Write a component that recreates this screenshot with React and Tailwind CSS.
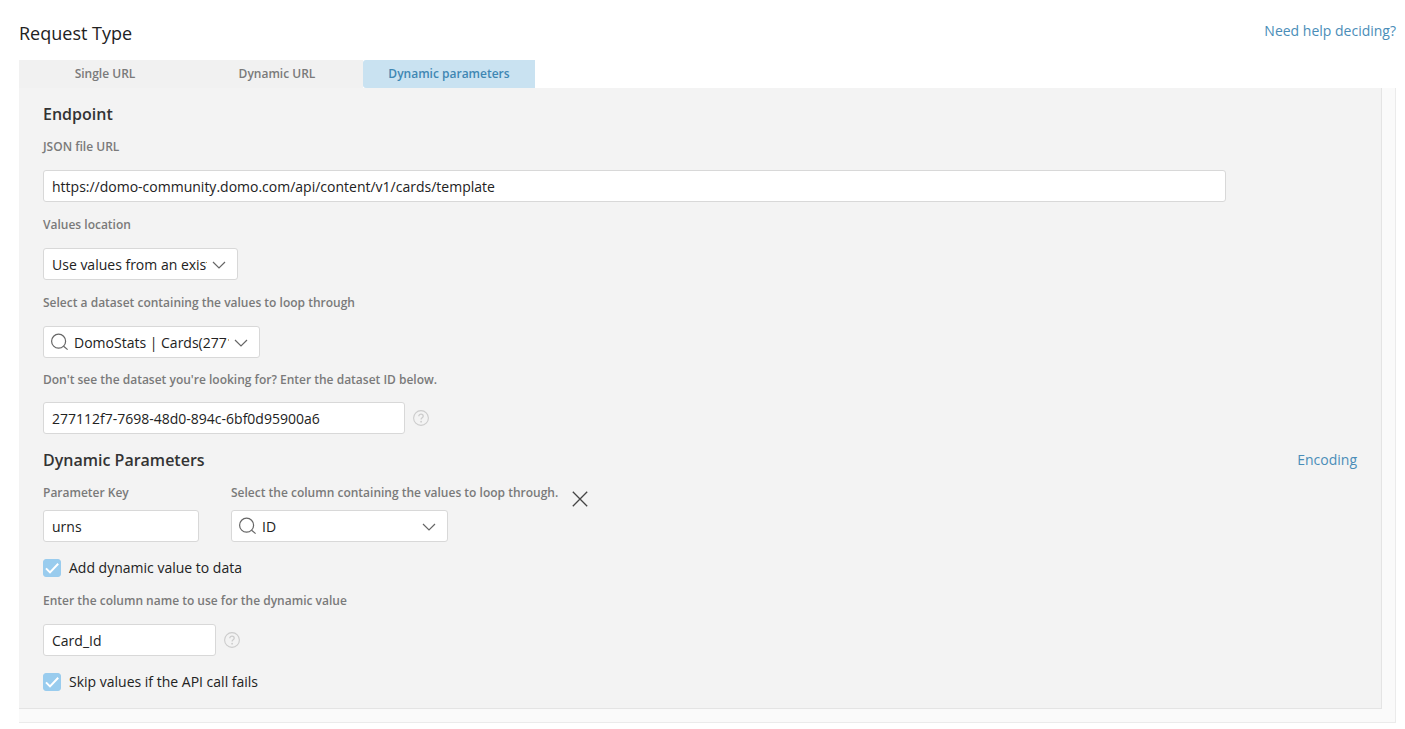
import { useState } from 'react';

const tabs = ['Single URL', 'Dynamic URL', 'Dynamic parameters'];

function Label({ htmlFor, children }) {
  return (
    <label htmlFor={htmlFor} className="block w-fit text-xs font-semibold text-[#7a7a7a]">
      {children}
    </label>
  );
}

function TextInput({ id, value, className }) {
  return (
    <input
      id={id}
      type="text"
      defaultValue={value}
      className={`block h-8 rounded-[3px] border border-[#d8d8d8] bg-white px-2 text-sm text-[#222] outline-none focus:border-[#99ccee] ${className}`}
    />
  );
}

function SearchIcon() {
  return (
    <svg viewBox="0 0 18 18" fill="none" stroke="#666" strokeWidth="1.2" className="pointer-events-none absolute top-[7px] left-2 size-[18px]">
      <circle cx="7.6" cy="8.2" r="7" />
      <path d="M12.6 13.2l4 3.4" />
    </svg>
  );
}

function Select({ id, option, search, className }) {
  return (
    <div className={`relative ${className}`}>
      {search && <SearchIcon />}
      <select
        id={id}
        className={`block h-8 w-full appearance-none overflow-hidden rounded-[3px] border border-[#d8d8d8] bg-white pt-0.5 pr-[30px] text-sm text-[#222] outline-none focus:border-[#99ccee] ${search ? 'pl-[30px]' : 'pl-2'}`}
      >
        <option>{option}</option>
      </select>
      <svg viewBox="0 0 14 8" fill="none" stroke="#666" strokeWidth="1.2" className="pointer-events-none absolute top-[13px] right-3 h-2 w-3.5">
        <path d="M1 1l6 6 6-6" />
      </svg>
    </div>
  );
}

function HelpButton() {
  return (
    <button type="button" aria-label="Help" className="cursor-pointer">
      <svg viewBox="0 0 16 16" fill="none" stroke="#ccc" strokeWidth="1.1" className="size-4">
        <circle cx="8" cy="8" r="7.4" />
        <path d="M5.8 6.3c0-1.3 1-2.1 2.2-2.1s2.2.8 2.2 2c0 1.5-2.1 1.6-2.1 3.2" strokeWidth="1.3" />
        <circle cx="8.1" cy="11.7" r=".9" fill="#ccc" stroke="none" />
      </svg>
    </button>
  );
}

function Checkbox({ id, children }) {
  return (
    <div className="flex h-5 items-center gap-2">
      <div className="relative size-[18px]">
        <input id={id} type="checkbox" defaultChecked className="peer block size-[18px] appearance-none rounded-[3px] border border-[#d8d8d8] bg-white checked:border-[#99ccee] checked:bg-[#99ccee]" />
        <svg viewBox="0 0 18 18" fill="none" stroke="#fff" strokeWidth="2" className="pointer-events-none absolute inset-0 hidden size-[18px] peer-checked:block">
          <path d="M3 9.4l4 4 8.2-8.6" />
        </svg>
      </div>
      <label htmlFor={id} className="text-sm text-[#222]">{children}</label>
    </div>
  );
}

export default function App() {
  const [active, setActive] = useState(2);
  const [hasParam, setHasParam] = useState(true);

  return (
    <main className="bg-white pt-5 pr-[9px] pb-1.5 pl-[19px] font-['Open_Sans',sans-serif]">
      <header className="flex items-start justify-between">
        <h1 className="text-lg leading-[26px] text-[#222]">Request Type</h1>
        <a href="#help" className="text-sm leading-[22px] text-[#4a8db8]">Need help deciding?</a>
      </header>

      <div role="tablist" className="mt-3.5 flex">
        {tabs.map((tab, i) => (
          <button
            key={tab}
            type="button"
            role="tab"
            aria-selected={active === i}
            onClick={() => setActive(i)}
            className={`h-7 w-[172px] cursor-pointer text-xs font-semibold ${active === i ? 'rounded-l-[3px] bg-[#c9e2f1] text-[#3f87b3]' : 'bg-[#f1f1f1] text-[#7a7a7a]'}`}
          >
            {tab}
          </button>
        ))}
      </div>

      <div className="border-r border-b border-[#ebebeb] bg-[#fafafa] pr-[13px] pb-[13px]">
        <form className="border-r border-b border-[#e4e4e4] bg-[#f3f3f3] px-6 pt-3.5 pb-4">
          <h2 className="mb-[13px] font-semibold text-[#333]">Endpoint</h2>

          <div className="flex flex-col gap-[15px]">
            <div className="flex flex-col gap-[15px]">
              <Label htmlFor="url">JSON file URL</Label>
              <TextInput id="url" value="https://domo-community.domo.com/api/content/v1/cards/template" className="w-9/10" />
            </div>
            <div className="flex flex-col gap-[15px]">
              <Label htmlFor="location">Values location</Label>
              <Select id="location" option="Use values from an existing dataset" className="w-[195px]" />
            </div>
            <div className="flex flex-col gap-[15px]">
              <Label htmlFor="dataset">Select a dataset containing the values to loop through</Label>
              <Select id="dataset" option="DomoStats | Cards(277112f7-7698-48d0-894c-6bf0d95900a6)" search className="w-[217px]" />
            </div>
          </div>
          <div className="mt-3.5 flex flex-col gap-3.5">
            <Label htmlFor="datasetId">Don't see the dataset you're looking for? Enter the dataset ID below.</Label>
            <div className="flex items-center gap-2">
              <TextInput id="datasetId" value="277112f7-7698-48d0-894c-6bf0d95900a6" className="w-[362px]" />
              <HelpButton />
            </div>
          </div>

          <div className="mt-3.5 mb-[13px] flex items-center justify-between">
            <h2 className="font-semibold text-[#333]">Dynamic Parameters</h2>
            <a href="#encoding" className="text-sm text-[#4a8db8]">Encoding</a>
          </div>

          {hasParam && (
            <div className="flex items-start">
              <div className="mr-8 flex flex-col gap-[9px]">
                <Label htmlFor="paramKey">Parameter Key</Label>
                <TextInput id="paramKey" value="urns" className="w-[156px]" />
              </div>
              <div className="mr-3.5 flex flex-col gap-[9px]">
                <Label htmlFor="column">Select the column containing the values to loop through.</Label>
                <Select id="column" option="ID" search className="w-[217px]" />
              </div>
              <button type="button" aria-label="Remove parameter" onClick={() => setHasParam(false)} className="mt-1.5 cursor-pointer">
                <svg viewBox="0 0 16 16" fill="none" stroke="#444" strokeWidth="1.3" className="size-4">
                  <path d="M.8.8l14.4 14.4M15.2.8L.8 15.2" />
                </svg>
              </button>
            </div>
          )}

          <div className="mt-4 flex flex-col gap-[15px]">
            <Checkbox id="addValue">Add dynamic value to data</Checkbox>
            <div className="flex flex-col gap-[15px]">
              <Label htmlFor="columnName">Enter the column name to use for the dynamic value</Label>
              <div className="flex items-center gap-2">
                <TextInput id="columnName" value="Card_Id" className="w-[173px]" />
                <HelpButton />
              </div>
            </div>
          </div>
          <div className="mt-4">
            <Checkbox id="skipValues">Skip values if the API call fails</Checkbox>
          </div>
        </form>
      </div>
    </main>
  );
}
